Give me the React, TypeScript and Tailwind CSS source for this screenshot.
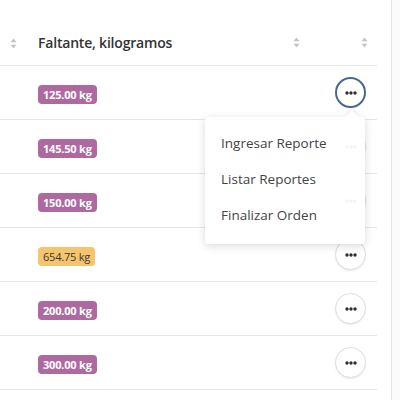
import { useState } from "react";

const rows = [
  { value: "125.00 kg", tone: "purple" },
  { value: "145.50 kg", tone: "purple" },
  { value: "150.00 kg", tone: "purple" },
  { value: "654.75 kg", tone: "yellow" },
  { value: "200.00 kg", tone: "purple" },
  { value: "300.00 kg", tone: "purple" },
];

const menuItems = ["Ingresar Reporte", "Listar Reportes", "Finalizar Orden"];

function SortIcon() {
  return (
    <svg width="7" height="11" viewBox="0 0 7 11" className="shrink-0">
      <path d="M3.5 0.5 L6.5 4.2 L0.5 4.2 Z" fill="#c4c4c4" />
      <path d="M3.5 10.5 L6.5 6.8 L0.5 6.8 Z" fill="#c4c4c4" />
    </svg>
  );
}

function Dots() {
  return (
    <svg width="12" height="4" viewBox="0 0 12 4">
      <circle cx="2" cy="2" r="1.7" fill="#2e2e2e" />
      <circle cx="6" cy="2" r="1.7" fill="#2e2e2e" />
      <circle cx="10" cy="2" r="1.7" fill="#2e2e2e" />
    </svg>
  );
}

export default function App() {
  const [open] = useState(0);

  return (
    <div
      className="relative w-[400px] h-[400px] overflow-hidden bg-white flex"
      style={{ fontFamily: '"Open Sans", "Noto Sans", sans-serif' }}
    >
      <div className="w-[377px] pt-[20px]">
        {/* header */}
        <div className="flex items-center h-[46px] border-b border-[#e6e6e6] text-[#333]">
          <div className="w-[38px] pl-[10px] pt-[1px]">
            <SortIcon />
          </div>
          <div className="w-[272px] flex items-center justify-between pr-[10px]">
            <span className="text-[14px] font-semibold tracking-[-0.2px]">Faltante, kilogramos</span>
            <SortIcon />
          </div>
          <div className="w-[67px] flex justify-end pr-[9px]">
            <SortIcon />
          </div>
        </div>

        {rows.map((row, i) => (
          <div key={i} className="flex items-center h-[54px] border-b border-[#e6e6e6]">
            <div className="w-[38px]" />
            <div className="w-[272px]">
              <span
                className={`inline-flex items-center h-[19px] px-[5px] rounded-[4px] text-[11px] tracking-[-0.2px] ${
                  row.tone === "yellow"
                    ? "bg-[#f6c46c] text-[#3a3a3a] font-medium"
                    : "bg-[#ae6aa0] text-white font-bold"
                }`}
              >
                {row.value}
              </span>
            </div>
            <div className="w-[67px] flex justify-end pr-[11px]">
              <button
                className={`flex items-center justify-center w-[31px] h-[31px] rounded-full bg-white ${
                  open === i
                    ? "border-2 border-[#48698f]"
                    : "border border-[#dedede] shadow-[0_1px_2px_rgba(0,0,0,0.08)]"
                }`}
              >
                <Dots />
              </button>
            </div>
          </div>
        ))}
      </div>
      <div className="w-[14px]" />
      <div className="flex-1 border-l border-[#e4e4e4] bg-[#fbfbfb]" />

      {/* dropdown menu */}
      <div className="absolute left-[205px] top-[117px] w-[160px] h-[127px] rounded-[4px] bg-white/95 shadow-[0_2px_8px_rgba(0,0,0,0.15)] pt-[8px]">
        <div className="absolute -top-[5px] left-[142px] w-[10px] h-[10px] rotate-45 bg-white shadow-[-2px_-2px_3px_rgba(0,0,0,0.06)]" />
        {menuItems.map((item) => (
          <div key={item} className="relative h-[36px] flex items-center pl-[16px] text-[13.5px] text-[#444]">
            {item}
          </div>
        ))}
      </div>
    </div>
  );
}
